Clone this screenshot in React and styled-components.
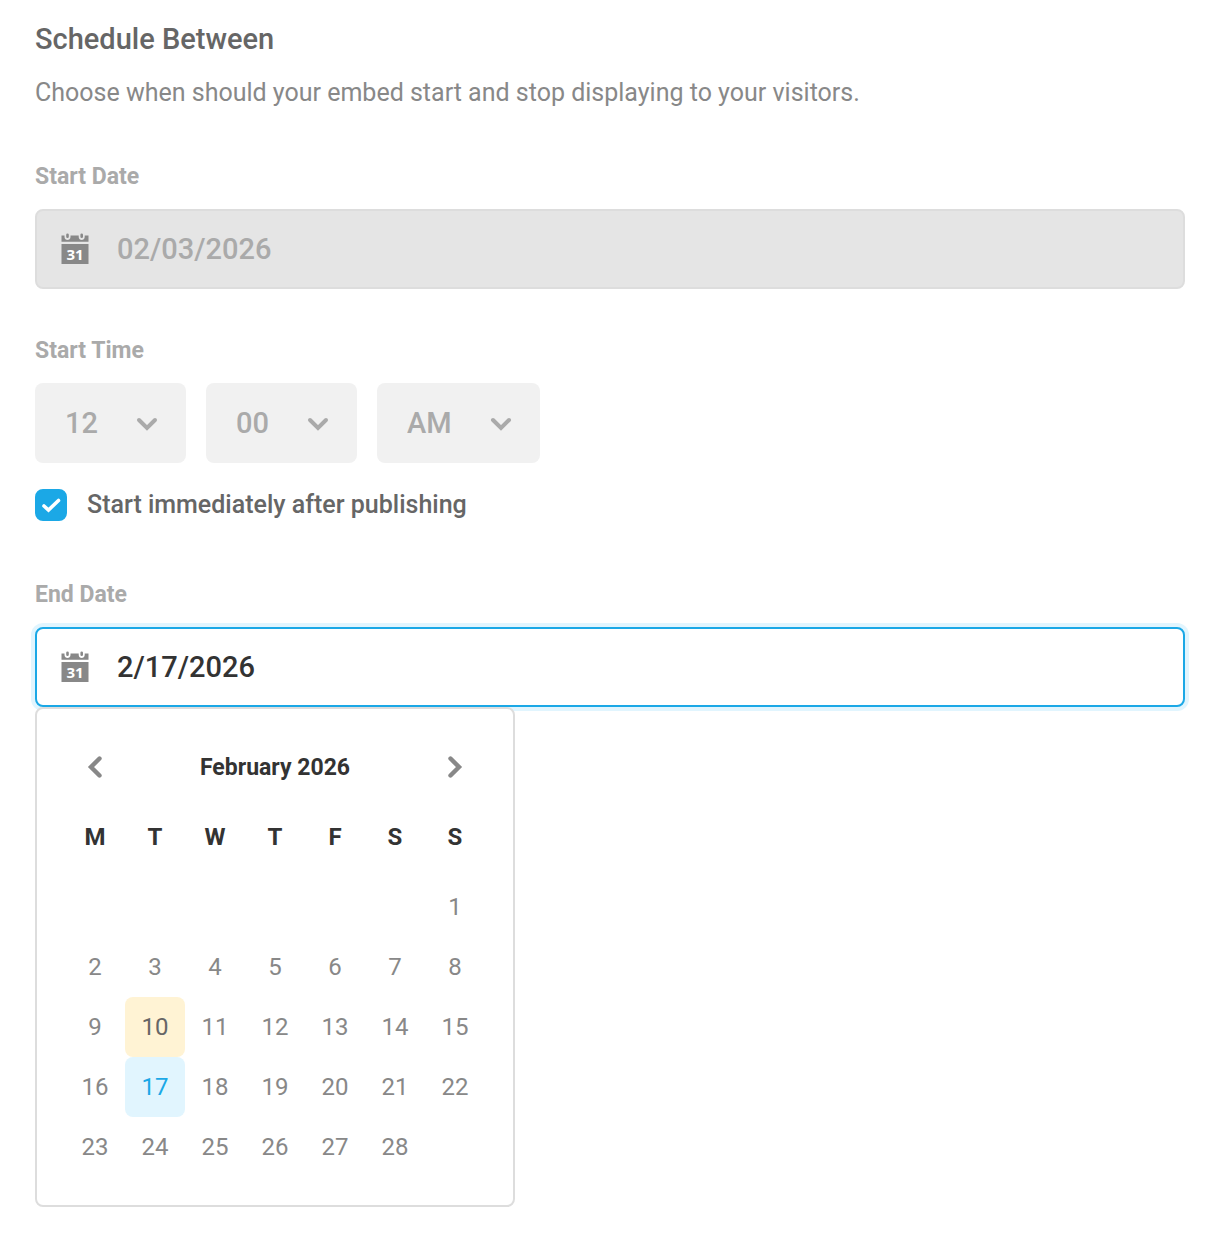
import React, { useState } from "react";
import styled, { createGlobalStyle, ThemeProvider } from "styled-components";

const theme = {
  blue: "#1ba8e6",
  lightBlue: "#e1f5fe",
  yellow: "#fff3d4",
  black: "#333333",
  dark: "#666666",
  grey: "#888888",
  muted: "#aaaaaa",
  border: "#dddddd"
};

const GlobalStyle = createGlobalStyle`
  * {
    box-sizing: border-box;
  }
  body {
    margin: 0;
    background-color: #fff;
    font-family: Roboto, "Liberation Sans", sans-serif;
  }
  button, input, select {
    font-family: inherit;
  }
`;

const Container = styled.main`
  padding: 19px 36px 37px 35px;
`;

const Title = styled.h1`
  margin: 0;
  color: ${props => props.theme.dark};
  font-size: 29px;
  line-height: 40px;
  font-weight: 500;
`;

const Description = styled.p`
  margin: 14px 0 44px;
  color: ${props => props.theme.grey};
  font-size: 25px;
  line-height: 40px;
`;

const Section = styled.section`
  margin-bottom: 42px;
`;

const Label = styled.label`
  display: block;
  margin-bottom: 12px;
  color: ${props => props.theme.muted};
  font-size: 23px;
  line-height: 40px;
  font-weight: 700;
`;

const GroupLabel = styled(Label).attrs({ as: "div" })``;

const Field = styled.div`
  display: flex;
  align-items: center;
  height: 80px;
  padding: 0 24px;
  gap: 28px;
  border: 2px solid ${props => props.theme.border};
  border-radius: 8px;
  background-color: ${props => (props.$disabled ? "#e5e5e5" : "#fff")};
  &:focus-within,
  &.active {
    border-color: ${props => props.theme.blue};
    box-shadow: 0 0 0 4px ${props => props.theme.lightBlue};
  }
`;

const DateInput = styled.input`
  flex: 1;
  min-width: 0;
  height: 40px;
  padding: 0;
  border: 0;
  outline: 0;
  background: transparent;
  color: ${props => props.theme.black};
  font-size: 29px;
  font-weight: 500;
  &:disabled {
    color: ${props => props.theme.muted};
  }
`;

const TimeRow = styled.div`
  display: flex;
  gap: 20px;
`;

const SelectWrapper = styled.div`
  position: relative;
  color: ${props => props.theme.muted};
  svg {
    position: absolute;
    top: 34px;
    right: 28px;
    pointer-events: none;
  }
`;

const Select = styled.select`
  display: block;
  appearance: none;
  height: 80px;
  padding: 0 88px 0 30px;
  border: 0;
  border-radius: 8px;
  background-color: #f1f1f1;
  color: ${props => props.theme.muted};
  font-size: 29px;
  font-weight: 500;
  opacity: 1;
`;

const CheckLabel = styled.label`
  display: flex;
  align-items: center;
  gap: 20px;
  margin: 22px 0 50px;
  color: ${props => props.theme.dark};
  font-size: 25px;
  line-height: 40px;
  font-weight: 500;
`;

const CheckBox = styled.span`
  display: grid;
  width: 32px;
  height: 32px;
  > * {
    grid-area: 1 / 1;
  }
  svg {
    pointer-events: none;
  }
`;

const CheckInput = styled.input`
  appearance: none;
  width: 32px;
  height: 32px;
  margin: 0;
  border: 2px solid ${props => props.theme.border};
  border-radius: 8px;
  &:checked {
    border-color: ${props => props.theme.blue};
    background-color: ${props => props.theme.blue};
  }
`;

const Calendar = styled.div`
  position: relative;
  width: 480px;
  padding: 28px;
  border: 2px solid ${props => props.theme.border};
  border-radius: 8px;
  background-color: #fff;
`;

const CalendarHeader = styled.div`
  display: flex;
  align-items: center;
  justify-content: space-between;
  margin-bottom: 10px;
`;

const Month = styled.div`
  color: ${props => props.theme.black};
  font-size: 23px;
  font-weight: 700;
`;

const ArrowButton = styled.button`
  display: flex;
  align-items: center;
  justify-content: center;
  width: 60px;
  height: 60px;
  padding: 0;
  border: 0;
  background: transparent;
  color: ${props => props.theme.grey};
  cursor: pointer;
`;

const Days = styled.table`
  width: 100%;
  table-layout: fixed;
  border-collapse: collapse;
`;

const Weekday = styled.th`
  height: 70px;
  padding: 0 0 10px;
  color: ${props => props.theme.black};
  font-size: 24px;
  font-weight: 700;
`;

const DayCell = styled.td`
  height: 60px;
  padding: 0;
`;

const Day = styled.button`
  display: block;
  width: 100%;
  height: 60px;
  padding: 0;
  border: 0;
  border-radius: 8px;
  background: transparent;
  color: ${props => props.theme.grey};
  font-size: 24px;
  cursor: pointer;
  &.today {
    background-color: ${props => props.theme.yellow};
    color: ${props => props.theme.dark};
  }
  &.selected {
    background-color: ${props => props.theme.lightBlue};
    color: ${props => props.theme.blue};
  }
`;

const CalendarIcon = () => (
  <svg width="28" height="32" viewBox="0 0 28 32" aria-hidden="true">
    <path
      fill="#888888"
      d="M0.5 2.5H3.5V4C3.5 8 9.5 8 9.5 4V2.5H17.7V4C17.7 8 23.7 8 23.7 4V2.5H27.5V8.7H0.5Z"
    />
    <path
      stroke="#888888"
      strokeWidth="2.6"
      strokeLinecap="round"
      d="M6.5 1.8V3.8M20.7 1.8V3.8"
    />
    <rect x="0.5" y="11" width="27" height="20" fill="#888888" />
    <text
      x="14"
      y="27"
      textAnchor="middle"
      fill="#ffffff"
      fontFamily="Noto Sans, sans-serif"
      fontSize="15"
      fontWeight="700"
    >
      31
    </text>
  </svg>
);

const DownIcon = () => (
  <svg width="22" height="14" viewBox="0 0 22 14" aria-hidden="true">
    <path
      d="M3 3L11 11L19 3"
      fill="none"
      stroke="currentColor"
      strokeWidth="4"
      strokeLinecap="round"
    />
  </svg>
);

const ArrowIcon = ({ d }) => (
  <svg width="16" height="24" viewBox="0 0 16 24" aria-hidden="true">
    <path
      d={d}
      fill="none"
      stroke="currentColor"
      strokeWidth="4.4"
      strokeLinecap="round"
    />
  </svg>
);

const CheckIcon = () => (
  <svg width="32" height="32" viewBox="0 0 32 32" aria-hidden="true">
    <path
      d="M9 17L13.5 21L23.5 11.5"
      fill="none"
      stroke="#ffffff"
      strokeWidth="3.6"
      strokeLinecap="round"
    />
  </svg>
);

const weekdays = [
  ["M", "Monday"],
  ["T", "Tuesday"],
  ["W", "Wednesday"],
  ["T", "Thursday"],
  ["F", "Friday"],
  ["S", "Saturday"],
  ["S", "Sunday"]
];

// February 2026 starts on a Sunday
const weeks = [0, 1, 2, 3, 4].map(week =>
  weekdays.map((_, i) => week * 7 + i - 5)
);

const TODAY = 10;

const TimeSelect = ({ label, value }) => (
  <SelectWrapper>
    <Select aria-label={label} defaultValue={value} disabled>
      <option>{value}</option>
    </Select>
    <DownIcon />
  </SelectWrapper>
);

const DatePicker = ({ selected, onSelect }) => (
  <Calendar>
    <CalendarHeader>
      <ArrowButton type="button" aria-label="Previous month">
        <ArrowIcon d="M12.5 3.5L4 12L12.5 20.5" />
      </ArrowButton>
      <Month>February 2026</Month>
      <ArrowButton type="button" aria-label="Next month">
        <ArrowIcon d="M3.5 3.5L12 12L3.5 20.5" />
      </ArrowButton>
    </CalendarHeader>
    <Days>
      <thead>
        <tr>
          {weekdays.map(([short, name]) => (
            <Weekday key={name} abbr={name} scope="col">
              {short}
            </Weekday>
          ))}
        </tr>
      </thead>
      <tbody>
        {weeks.map((week, i) => (
          <tr key={i}>
            {week.map(day => (
              <DayCell key={day}>
                {day > 0 && day <= 28 && (
                  <Day
                    type="button"
                    onClick={() => onSelect(day)}
                    className={
                      day === selected
                        ? "selected"
                        : day === TODAY
                        ? "today"
                        : ""
                    }
                  >
                    {day}
                  </Day>
                )}
              </DayCell>
            ))}
          </tr>
        ))}
      </tbody>
    </Days>
  </Calendar>
);

const App = () => {
  const [selected, setSelected] = useState(17);
  return (
    <ThemeProvider theme={theme}>
      <GlobalStyle />
      <Container>
        <Title>Schedule Between</Title>
        <Description>
          Choose when should your embed start and stop displaying to your
          visitors.
        </Description>
        <Section>
          <Label htmlFor="start-date">Start Date</Label>
          <Field $disabled>
            <CalendarIcon />
            <DateInput id="start-date" value="02/03/2026" disabled readOnly />
          </Field>
        </Section>
        <Section>
          <GroupLabel id="start-time">Start Time</GroupLabel>
          <TimeRow role="group" aria-labelledby="start-time">
            <TimeSelect label="Hour" value="12" />
            <TimeSelect label="Minute" value="00" />
            <TimeSelect label="AM or PM" value="AM" />
          </TimeRow>
          <CheckLabel>
            <CheckBox>
              <CheckInput type="checkbox" defaultChecked />
              <CheckIcon />
            </CheckBox>
            Start immediately after publishing
          </CheckLabel>
        </Section>
        <div>
          <Label htmlFor="end-date">End Date</Label>
          <Field className="active">
            <CalendarIcon />
            <DateInput id="end-date" value={`2/${selected}/2026`} readOnly />
          </Field>
          <DatePicker selected={selected} onSelect={setSelected} />
        </div>
      </Container>
    </ThemeProvider>
  );
};

export default App;
